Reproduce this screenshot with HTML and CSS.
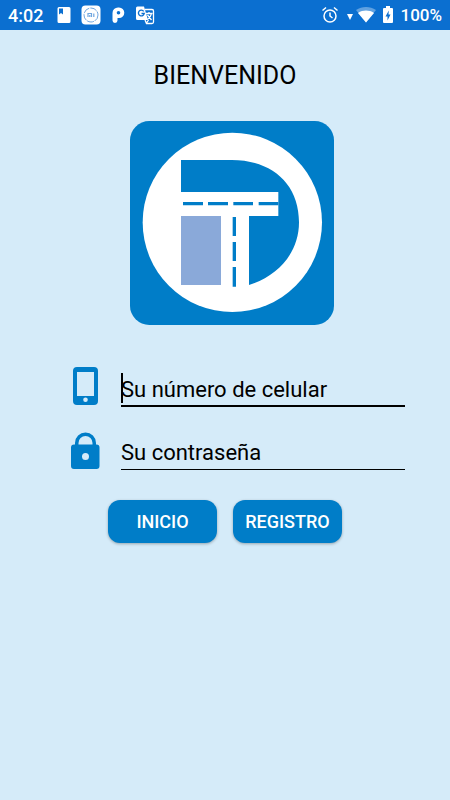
FILE: index.html
```html
<!DOCTYPE html>
<html lang="es">

<head>
    <meta charset="UTF-8">
    <meta name="viewport" content="width=device-width, initial-scale=1.0">
    <title>Bienvenido</title>
    <link rel="stylesheet" href="styles.css">
</head>

<body>

    <header class="status-bar">
        <div class="status-left">
            <span class="clock">4:02</span>
            <svg class="status-icon" viewBox="0 0 20 20">
                <path fill="#fff" fill-rule="evenodd" d="M5 2H15a1.500 1.500 0 0 1 1.500 1.500v13A1.500 1.500 0 0 1 15 18H5a1.500 1.500 0 0 1-1.500-1.500v-13A1.500 1.500 0 0 1 5 2zM5 3.500v6l2-1.500 2 1.500v-6z" />
            </svg>
            <svg class="status-icon" viewBox="0 0 20 20">
                <rect x="0.500" y="0.500" width="19" height="19" rx="4" fill="#fff" />
                <circle cx="10" cy="10" r="7" fill="none" stroke="#6fa6e0" stroke-width="1" stroke-dasharray="7 1" />
                <path fill="none" stroke="#6fa6e0" stroke-width="1.200" d="M7 12V8.500h3.500V12M8.800 10v2M12.800 8.500V12" />
            </svg>
            <svg class="status-icon" viewBox="0 0 20 20">
                <path fill="#fff" fill-rule="evenodd" d="M4.500 8.500V8a5.500 5.500 0 0 1 5.500-5.500h1a5.300 5.300 0 0 1 0 10.600H9.500v2.400a2.500 2.500 0 0 1-5 0zM10.500 6a1.800 1.800 0 1 0 0 3.600 1.800 1.800 0 0 0 0-3.600z" />
            </svg>
            <svg class="status-icon" viewBox="0 0 20 20">
                <path fill="#fff" d="M2.500 1.500H9L13 15H2.500A1.500 1.500 0 0 1 1 13.500V3a1.500 1.500 0 0 1 1.500-1.500z" />
                <path fill="none" stroke="#fff" stroke-width="1.300" d="M10 4.500h7A1.500 1.500 0 0 1 18.500 6v11a1.500 1.500 0 0 1-1.500 1.500h-5.500L10 15M11 8.500h6.500M14 7v1.500M16.500 8.500c-.5 3-2 4.500-4 6M12.500 10l4 5M11.500 18l2-3" />
                <path fill="none" stroke="#0b6fd0" stroke-width="1.400" d="M8.700 6.300A2.900 2.900 0 1 0 9.200 8.500H6.500" />
            </svg>
        </div>
        <div class="status-right">
            <svg class="status-icon" viewBox="0 0 20 20">
                <circle cx="10" cy="11" r="6" fill="none" stroke="#fff" stroke-width="1.500" />
                <path fill="none" stroke="#fff" stroke-width="1.500" d="M10 7.500V11l2.500 2M2.500 5.500l3.500-3M17.500 5.500L14 2.500" />
            </svg>
            <svg class="arrow-icon" viewBox="0 0 6 20">
                <path fill="#fff" d="M0 9h6L3 15z" />
            </svg>
            <svg class="status-icon" viewBox="0 0 20 20">
                <path fill="#fff" opacity="0.350" d="M10 17.500L0 5C6 1 14 1 20 5z" />
                <path fill="#fff" d="M10 17.500L2 8C7 4.800 13 4.800 18 8z" />
            </svg>
            <svg class="battery-icon" viewBox="0 0 10 20">
                <path fill="#fff" fill-rule="evenodd" d="M3 1h4v2h2a1 1 0 0 1 1 1v13a1 1 0 0 1-1 1H1a1 1 0 0 1-1-1V4a1 1 0 0 1 1-1h2zM5.800 5.500L2.500 11.500h2V15.500L7.500 9.500h-2z" />
            </svg>
            <span class="battery-text">100%</span>
        </div>
    </header>

    <main class="login">
        <h1 class="title">BIENVENIDO</h1>

        <svg class="logo" viewBox="0 0 612 612" role="img" aria-label="Logo">
            <rect width="612" height="612" rx="58" fill="#007dc8" />
            <circle cx="307" cy="304" r="269" fill="#fff" />
            <path fill="#007dc8" d="M153 117H305C425 117 507 188 507 304C507 398 440 467 357 492V285H445V213H153z" />
            <rect x="153" y="285" width="120" height="207" fill="#8aa9d9" />
            <path fill="none" stroke="#007dc8" stroke-width="10" d="M159 248h60M234 248h60M310 248h59M386 248h59M313 288v57M313 363v57M313 438v59" />
        </svg>

        <form class="login-form" onsubmit="return false;">
            <div class="field field-active">
                <label for="phone" aria-label="Su número de celular">
                    <svg class="field-icon" viewBox="0 0 32 40">
                        <path fill="#007dc8" fill-rule="evenodd" d="M8 0h17a4 4 0 0 1 4 4v30a4 4 0 0 1-4 4H8a4 4 0 0 1-4-4V4a4 4 0 0 1 4-4zM8 5v24h17V5zM16.500 30.500a2.300 2.300 0 1 0 0 4.600 2.300 2.300 0 0 0 0-4.600z" />
                    </svg>
                </label>
                <input id="phone" type="tel" placeholder="Su número de celular">
            </div>
            <div class="field">
                <label for="password" aria-label="Su contraseña">
                    <svg class="field-icon" viewBox="0 0 32 40">
                        <path fill="#007dc8" fill-rule="evenodd" d="M6 14.500V13a10.500 10.500 0 0 1 21 0v1.500h.5a3 3 0 0 1 3 3V36a3 3 0 0 1-3 3H5a3 3 0 0 1-3-3V17.500a3 3 0 0 1 3-3zM9.500 14.500h14V13a7 7 0 0 0-14 0zM16.500 23a3.500 3.500 0 1 0 0 7 3.500 3.500 0 0 0 0-7z" />
                    </svg>
                </label>
                <input id="password" type="password" placeholder="Su contraseña">
            </div>

            <div class="btn-list">
                <button type="submit">INICIO</button>
                <button type="button">REGISTRO</button>
            </div>
        </form>
    </main>

</body>

</html>
```

FILE: styles.css
```css
* {
    margin: 0;
    padding: 0;
    box-sizing: border-box;
}

body {
    min-height: 100vh;
    background-color: #d5ebf9;
    font-family: Roboto, sans-serif;
    color: black;
}

.status-bar {
    display: flex;
    align-items: center;
    justify-content: space-between;
    height: 30px;
    padding: 0 8px;
    background-color: #0b6fd0;
    color: white;
    font-size: 18px;
    font-weight: 500;
}

.status-left,
.status-right {
    display: flex;
    align-items: center;
}

.status-left {
    gap: 7px;
}

.status-right {
    gap: 7px;
}

.clock {
    margin-right: 4px;
}

.status-icon {
    width: 20px;
    height: 20px;
}

.arrow-icon {
    width: 6px;
    height: 20px;
    margin-right: -4px;
}

.battery-icon {
    width: 10px;
    height: 20px;
}

.battery-text {
    font-size: 17px;
}

.login {
    display: flex;
    flex-direction: column;
    align-items: center;
    padding: 31px 45px;
}

.title {
    font-size: 25px;
    font-weight: 400;
    line-height: 30px;
}

.logo {
    width: 204px;
    height: 204px;
    margin: 30px 0 38px 13px;
}

.login-form {
    width: 100%;
}

.field {
    display: flex;
    align-items: flex-end;
    padding-left: 24px;
    margin-bottom: 19px;
}

.field label {
    display: flex;
    margin-right: 20px;
}

.field-icon {
    width: 32px;
    height: 40px;
}

.field input {
    flex: 1;
    min-width: 0;
    height: 44px;
    padding: 12px 0 2px;
    border: none;
    border-bottom: 1px solid black;
    outline: none;
    background: none;
    color: black;
    font-family: Roboto, sans-serif;
    font-size: 22px;
}

.field input::placeholder {
    color: black;
    opacity: 1;
}

/* thicker line and cursor on the field being edited */
.field-active input {
    border-bottom: 2px solid black;
    background: linear-gradient(black, black) 0 10px / 2px 30px no-repeat;
}

.btn-list {
    display: flex;
    justify-content: center;
    gap: 16px;
    margin-top: 30px;
}

.btn-list button {
    width: 109px;
    height: 43px;
    border: none;
    border-radius: 12px;
    background-color: #007dc8;
    box-shadow: 0 1px 3px rgba(0, 0, 0, 0.3);
    color: white;
    font-family: Roboto, sans-serif;
    font-size: 18px;
    font-weight: 500;
    cursor: pointer;
}
```
